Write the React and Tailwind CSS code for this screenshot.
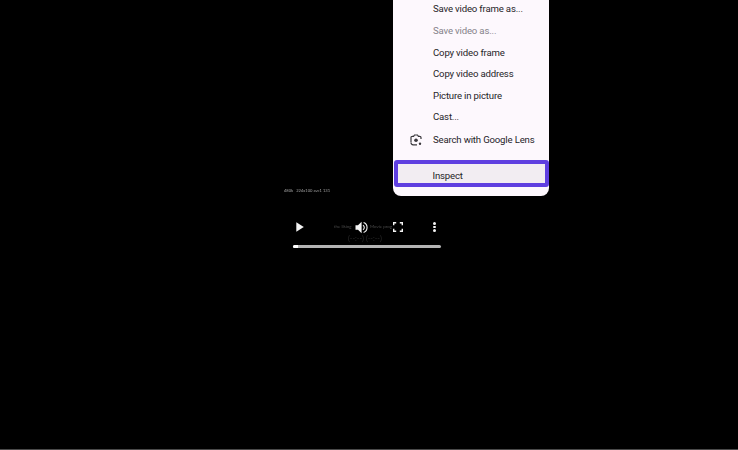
import React from "react";

function Item({ label, disabled, icon }) {
  return (
    <div className="flex h-[21.6px] items-center pl-[17px]">
      <span className="flex w-[23px] shrink-0 items-center">{icon}</span>
      <span className={`text-[9.6px] leading-none tracking-[-0.17px] whitespace-nowrap ${disabled ? "text-[#85828a]" : "text-[#262428]"}`}>{label}</span>
    </div>
  );
}

function Lens() {
  return (
    <svg width="12" height="12" viewBox="0 0 12 12" fill="none" className="-ml-[0.5px] -mt-[1px]">
      <path d="M1 8.2V3.6A1.3 1.3 0 0 1 2.3 2.3H3.6L4.5 1H7.5L8.4 2.3H9.7A1.3 1.3 0 0 1 11 3.6V5" stroke="#3a383c" strokeWidth="1.2" />
      <path d="M1 8.6A2.2 2.2 0 0 0 3.2 10.8H7" stroke="#3a383c" strokeWidth="1.2" />
      <circle cx="6" cy="6.2" r="1.8" fill="#3a383c" />
      <circle cx="10" cy="9.8" r="1.2" fill="#3a383c" />
    </svg>
  );
}

function Play() {
  return (
    <svg width="8" height="10" viewBox="0 0 8 10" className="block">
      <path d="M0.3 0.2L7.8 5L0.3 9.8Z" fill="#f4f4f4" />
    </svg>
  );
}

function Volume() {
  return (
    <svg width="13" height="13" viewBox="0 0 13 13" fill="none" className="block">
      <path d="M0.5 4.2H3L6.6 0.8V12.2L3 8.8H0.5Z" fill="#f4f4f4" />
      <path d="M8 4.2A2.7 2.7 0 0 1 8 8.8" stroke="#f4f4f4" strokeWidth="1.1" />
      <path d="M8.6 1.6A5.2 5.2 0 0 1 8.6 11.4" stroke="#f4f4f4" strokeWidth="1.1" />
    </svg>
  );
}

function Fullscreen() {
  return (
    <svg width="10" height="10" viewBox="0 0 10 10" fill="none" className="block">
      <path d="M0.7 3.2V0.7H3.2M6.8 0.7H9.3V3.2M9.3 6.8V9.3H6.8M3.2 9.3H0.7V6.8" stroke="#f4f4f4" strokeWidth="1.4" />
    </svg>
  );
}

export default function App() {
  return (
    <div className="relative flex h-[450px] w-[738px] flex-col overflow-hidden bg-black font-['Lato','Noto_Sans',sans-serif]">
      <div className="ml-[284px] mt-[189px] h-[4px] text-[4.1px] leading-[4px] whitespace-nowrap text-[#a0a0a0] blur-[0.25px]">
        <span>480k</span>
        <span className="ml-[3px]">224x100 avc1 131</span>
      </div>

      <div className="relative ml-[293px] mt-[26px] flex h-[16px] w-[148px] items-center">
        <span className="absolute left-[41px] top-[5.5px] text-[4.4px] leading-[4px] whitespace-nowrap text-[#4a4a4a] blur-[0.25px]">the liking</span>
        <span className="absolute left-[77px] top-[5.5px] text-[4.4px] leading-[4px] whitespace-nowrap text-[#4a4a4a] blur-[0.25px]">Movie prog</span>
        <div className="ml-[3px] w-[59px]"><Play /></div>
        <Volume />
        <div className="ml-[25px]"><Fullscreen /></div>
        <div className="ml-[30px] flex flex-col gap-[1px]">
          <span className="h-[2.8px] w-[2.8px] rounded-full bg-[#f4f4f4]" />
          <span className="h-[2.8px] w-[2.8px] rounded-full bg-[#f4f4f4]" />
          <span className="h-[2.8px] w-[2.8px] rounded-full bg-[#f4f4f4]" />
        </div>
      </div>

      <div className="ml-[348px] -mt-[1px] flex h-[8px] gap-[2px] text-[7px] leading-[8px] whitespace-nowrap text-[#2c2c2c] blur-[0.25px]">
        <span>(--:--)</span>
        <span>(--:--)</span>
      </div>

      <div className="ml-[293px] mt-[3px] flex h-[3px] w-[148px] overflow-hidden rounded-full bg-[#b4b4b4]">
        <div className="h-full w-[5px] bg-white" />
      </div>

      <div className="mt-auto h-[1px] w-full bg-[#4a4a4a]" />

      <div className="absolute left-[393px] top-0 h-[196px] w-[156px] overflow-hidden rounded-b-[8px] bg-[#fdf8fd] font-['Roboto','Noto_Sans',sans-serif]">
        <div className="-mt-[1.6px]">
          <Item label="Save video frame as..." />
          <Item label="Save video as..." disabled />
          <Item label="Copy video frame" />
          <Item label="Copy video address" />
          <Item label="Picture in picture" />
          <Item label="Cast..." />
          <div className="mt-[1.5px]">
            <Item label="Search with Google Lens" icon={<Lens />} />
          </div>
        </div>
        <div className="absolute left-[1px] top-[160px] flex h-[27px] w-[155px] items-center rounded-[3px] border-[4.5px] border-[#5f3fe0] bg-[#f2edf2] pl-[34.5px] pt-[5px]">
          <span className="text-[9.6px] leading-none tracking-[-0.17px] text-[#262428]">Inspect</span>
        </div>
      </div>
    </div>
  );
}
